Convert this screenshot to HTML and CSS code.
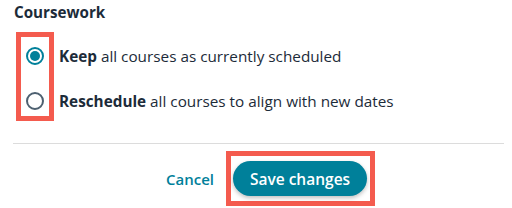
FILE: index.html
```html
<!DOCTYPE html>
<html lang="en">
<head>
  <meta charset="UTF-8" />
  <title>Coursework</title>
  <link rel="stylesheet" href="styles.css">
</head>
<body>
  <section class="panel">
    <h2 class="title">Coursework</h2>

    <div class="options">
      <div class="radio-col mark">
        <span class="radio checked"></span>
        <span class="radio"></span>
      </div>
      <div class="label-col">
        <label><b>Keep</b> all courses as currently scheduled</label>
        <label><b>Reschedule</b> all courses to align with new dates</label>
      </div>
    </div>

    <hr class="divider" />

    <div class="actions">
      <a href="#" class="cancel">Cancel</a>
      <div class="mark btn-wrap">
        <button class="save">Save changes</button>
      </div>
    </div>
  </section>
</body>
</html>
```

FILE: styles.css
```css
body {
  margin: 0;
  font-family: "Open Sans", sans-serif;
  color: #1c2b39;
  background: #fff;
}
.panel {
  padding: 2px 8px 0 13px;
}
.title {
  margin: 0 0 10px 1px;
  font-size: 15.2px;
  line-height: 20px;
  font-weight: 700;
}
.options {
  display: flex;
  align-items: flex-start;
  margin-left: 3px;
}
.mark {
  border: 5px solid #f45b4e;
}
.radio-col {
  display: flex;
  flex-direction: column;
  gap: 27px;
  padding: 10px 5px 6px;
}
.radio {
  width: 18px;
  height: 18px;
  box-sizing: border-box;
  border: 2px solid #4d6070;
  border-radius: 50%;
  display: flex;
  align-items: center;
  justify-content: center;
}
.radio.checked {
  border-color: #00809a;
}
.radio.checked::after {
  content: "";
  width: 10px;
  height: 10px;
  border-radius: 50%;
  background: #00809a;
}
.label-col {
  display: flex;
  flex-direction: column;
  gap: 25px;
  padding: 14px 0 0 5px;
}
.label-col label {
  font-size: 15.3px;
  line-height: 20px;
}
.divider {
  margin: 22px 0 0;
  border: none;
  border-top: 1px solid #dcdcdc;
}
.actions {
  display: flex;
  align-items: center;
  gap: 12px;
  padding: 7px 0 0 153px;
}
.cancel {
  color: #00809a;
  text-decoration: none;
  font-size: 15px;
  font-weight: 600;
}
.btn-wrap {
  padding: 5px 3px 5px 2px;
}
.save {
  width: 134px;
  height: 35px;
  border: none;
  border-radius: 18px;
  background: #00809a;
  color: #fff;
  font-family: "Open Sans", sans-serif;
  font-size: 15.5px;
  font-weight: 600;
  box-shadow: 0 2px 4px rgba(0, 0, 0, 0.25);
  display: block;
}
```
